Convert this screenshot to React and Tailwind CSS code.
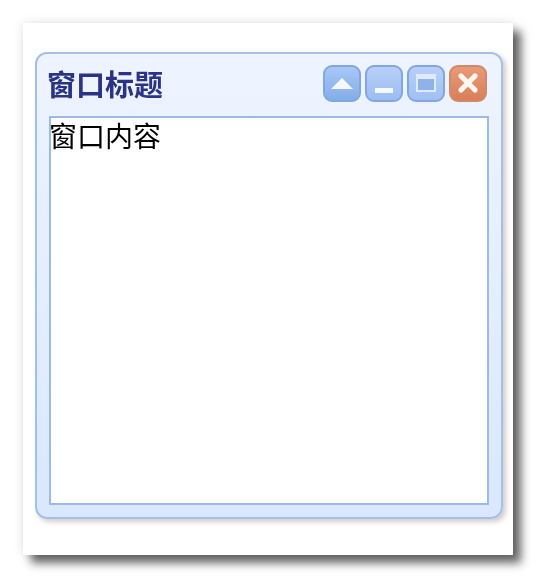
import { X } from 'lucide-react'

const cjk = { fontFamily: '"Noto Sans CJK SC", sans-serif' }

function TitleButton({ className, children }) {
  return (
    <div className={`flex h-[37px] w-[38px] items-center justify-center rounded-[9px] border-2 ${className}`}>
      {children}
    </div>
  )
}

function App() {
  return (
    <div className="h-[582px] w-[539px] overflow-hidden bg-white pl-[23px] pt-[23px]">
      {/* Card */}
      <div className="h-[532px] w-[490px] bg-white pl-3 pt-[29px] shadow-[8px_8px_9px_rgba(0,0,0,0.6),0_0_10px_rgba(0,0,0,0.12)] blur-[0.5px]">
        {/* Window */}
        <div className="flex h-[467px] w-[468px] flex-col rounded-xl border-2 border-[#a4bfec] bg-gradient-to-b from-[#eef4ff] to-[#d9e8fe] px-3 pb-[12px] shadow-[3px_3px_5px_rgba(110,90,80,0.3)]">
          {/* Title bar */}
          <div className="flex h-[62px] shrink-0 items-center justify-between">
            <span className="-ml-[2px] pb-[4px] text-[29px] leading-none font-bold text-[#2a3386]" style={cjk}>窗口标题</span>
            <div className="mr-[2px] flex gap-[4px] pb-[4px]">
              <TitleButton className="border-[#82a7e0] bg-gradient-to-b from-[#a8c7f6] to-[#83ade9]">
                <svg width="22" height="11" viewBox="0 0 22 11"><path d="M11 0 22 11H0z" fill="#f4f8ff" /></svg>
              </TitleButton>
              <TitleButton className="items-end border-[#82a7e0] bg-gradient-to-b from-[#b7d0f7] to-[#9cbdf0] pb-[7px]">
                <div className="h-[5px] w-[18px] bg-[#f4f8ff]" />
              </TitleButton>
              <TitleButton className="border-[#82a7e0] bg-gradient-to-b from-[#b7d0f7] to-[#a0c0f2]">
                <div className="flex h-[18px] w-[20px] flex-col border-2 border-[#dfeafc] bg-[#8fb2e8]">
                  <div className="h-[3px] bg-[#dfeafc]" />
                </div>
              </TitleButton>
              <TitleButton className="border-[#cf8a6a] bg-gradient-to-b from-[#e89a78] to-[#d97f58]">
                <X size={28} strokeWidth={4.5} color="#fdf5f0" />
              </TitleButton>
            </div>
          </div>
          {/* Content */}
          <div className="flex-1 border-2 border-[#9db9ea] bg-white">
            <div className="-ml-[2px] text-[28px] leading-[34px] text-black" style={cjk}>窗口内容</div>
          </div>
        </div>
      </div>
    </div>
  )
}

export default App
